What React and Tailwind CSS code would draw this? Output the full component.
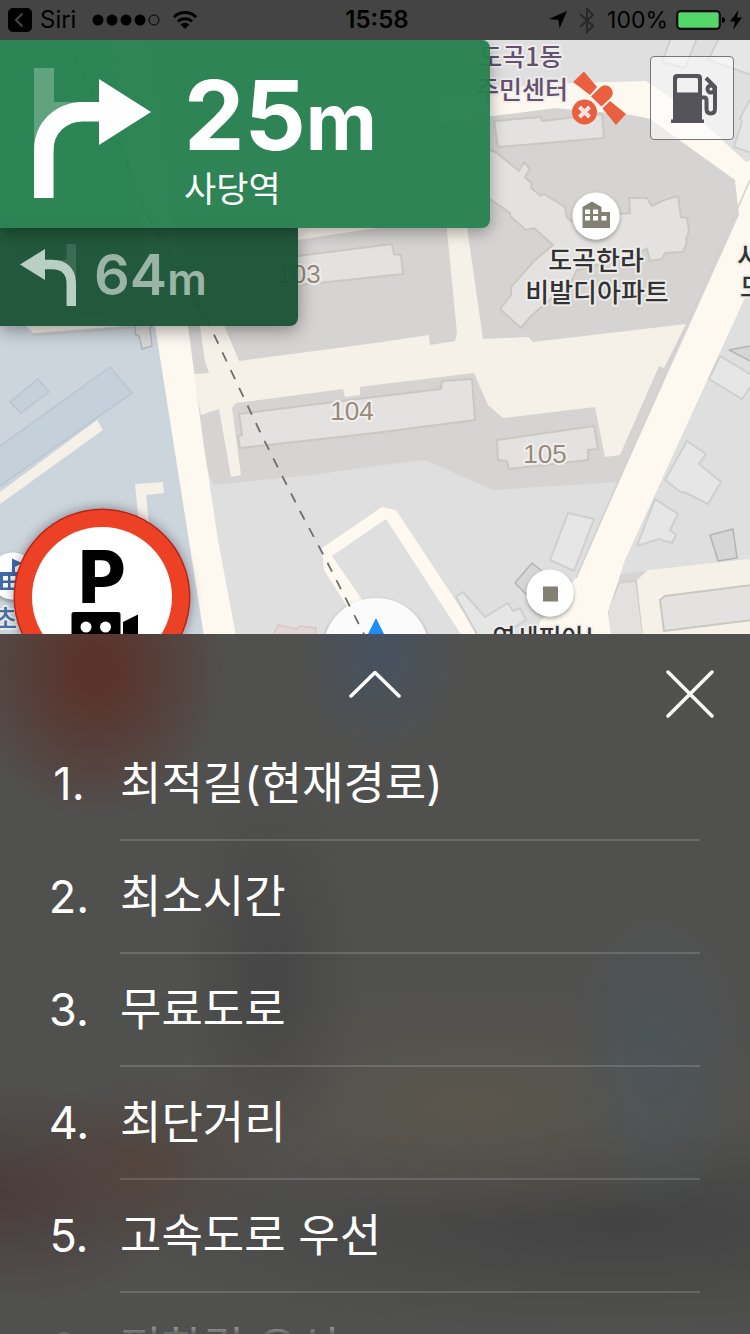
import React from "react";

const CREAM = "#fdf8f0";
const ALLEY = "#f5f0e8";

const routes = [
  "최적길(현재경로)",
  "최소시간",
  "무료도로",
  "최단거리",
  "고속도로 우선",
  "편한길 우선",
];

const complexBuildings = [
  "290,257 392,244 394,254 401,255 403,274 290,286",
  "239,414 374,397 441,389 442,381 472,379 475,420 375,433 240,448 238,436 242,435",
  "497,440 594,426 598,449 588,450 588,460 509,469 507,461 498,460",
  "494,121 541,117 542,121 602,114 604,138 498,147",
  "480,145 497,153 519,171 524,162 530,169 525,177 532,184 531,188 541,196 544,194 565,207 567,218 576,224 620,214 630,213 629,198 647,198 652,206 664,200 678,196 681,217 687,218 689,230 686,240 687,242 683,252 665,253 662,259 650,261 647,249 625,258 577,270 572,280 531,316 521,328 500,309 511,295 511,287 534,261 553,245 534,228 526,230 510,216 510,213 490,199 480,190",
  "660,600 665,596 760,584 760,619 664,631",
];

const cityBuildings = [
  "720,356 757,378 742,399 709,379",
  "687,441 706,454 699,464 721,482 708,504 684,492 682,493 665,480",
  "655,499 678,514 670,530 676,535 672,543 659,539 637,546",
  "568,513 594,519 574,571 550,560",
  "456,597 463,592 485,617 508,603 513,611 520,608 526,620 500,636 478,636",
  "671,38 662,62 685,68 697,38",
  "720,36 708,60 760,78 760,38",
  "750,100 740,118 742,122 734,147 760,156 760,100",
];

const darkOutlined = [
  "729,350 760,344 760,366",
  "710,535 733,529 737,558 718,561",
  "532,563 544,573 530,598 515,583",
  "136,322 152,320 150,330 152,346 142,349 139,336 135,334",
];

function MapLabel({ x, y, size, fill, children, weight = 500, anchor = "middle" }) {
  return (
    <text
      x={x}
      y={y}
      fontSize={size}
      fill={fill}
      fontWeight={weight}
      textAnchor={anchor}
      stroke="#f0efed"
      strokeOpacity="0.9"
      strokeWidth="4"
      strokeLinejoin="round"
      paintOrder="stroke"
      className="font-['Noto_Sans_CJK_KR',sans-serif]"
    >
      {children}
    </text>
  );
}

function BuildingNumber({ x, y, children }) {
  return (
    <text
      x={x}
      y={y}
      fontSize="26"
      fill="#978b7b"
      textAnchor="middle"
      stroke="#f0efed"
      strokeWidth="4"
      strokeLinejoin="round"
      paintOrder="stroke"
      className="font-['Liberation_Sans',sans-serif]"
    >
      {children}
    </text>
  );
}

function MapCanvas() {
  return (
    <svg
      viewBox="0 40 750 594"
      preserveAspectRatio="xMinYMin slice"
      className="absolute inset-0 h-full w-full"
      role="img"
      aria-label="지도"
    >
      <defs>
        <filter id="pinShadow" x="-30%" y="-30%" width="160%" height="160%">
          <feDropShadow dx="0" dy="2" stdDeviation="2" floodOpacity="0.35" />
        </filter>
        <filter id="signShadow" x="-30%" y="-30%" width="160%" height="160%">
          <feDropShadow dx="0" dy="0" stdDeviation="6" floodOpacity="0.4" />
        </filter>
      </defs>
      <rect x="0" y="40" width="750" height="594" fill="#dfdfdf" />
      <polygon
        points="160,130 545,108 650,113 735,180 739,215 618,482 493,490 425,460 375,466 312,475 213,485 150,300"
        fill="#d5d4d2"
      />
      <polygon points="0,40 120,40 156,326 206,634 0,634" fill="#ccd4dc" />
      <polygon points="618,575 680,566 650,590 620,584" fill="#d5d4d2" />
      <polygon points="619,583 636,581 643,636 609,636 608,610" fill="#e2e1df" stroke="#cfcecc" strokeWidth="1.5" />

      <g fill={ALLEY}>
        <polygon points="20,320 33,333 150,324 150,310" />
        <polygon points="290,226 390,226 290,241" />
        <polygon points="199,320 222,320 239,361 375,343 429,335 430,345 455,341 457,333 446,220 466,220 483,339 528,337 533,342 686,324 664,368 659,366 620,455 605,457 595,407 503,418 488,405 474,373 375,385 360,387 360,395 345,397 343,389 236,403 232,408 241,475 231,477 219,409 201,415 193,374 209,373 205,361" />
        <polygon points="0,492 97,420 103,430 0,504" />
        <polygon points="135,484 163,482 164,493 146,495 149,524 139,524" />
        <polygon points="637,580 648,570 760,558 760,636 643,636" />
      </g>
      <polyline points="33,335 150,326" fill="none" stroke="#c9c8c6" strokeWidth="2" />

      <g fill="#c4d0da" stroke="#bbc5ce" strokeWidth="1.5">
        <polygon points="10,402 38,379 49,392 21,413" />
        <polygon points="-4,449 110,367 132,393 -4,489" />
      </g>

      <g fill={CREAM}>
        <polygon points="110,40 150,40 188,326 203,440 218,540 236,636 204,636 155,326" />
        <polygon points="440,92 572,83 646,81 694,114 746,162 760,156 760,265 625,560 608,612 611,636 536,636 540,622 576,578 739,215 735,180 650,119 632,115 555,108 440,123" />
        <polygon points="322,548 382,507 396,510 479,636 462,636 386,519 332,556 372,614 362,630 324,570" />
      </g>
      <polyline points="750,180 576,578" fill="none" stroke="#d2d1cf" strokeWidth="1.5" />

      <g fill="#e3e2e0" stroke="#c9c8c1" strokeWidth="2" strokeLinejoin="round">
        {complexBuildings.map((p) => (
          <polygon key={p} points={p} />
        ))}
      </g>
      <g fill="#e6e6e6" stroke="#cfcfcf" strokeWidth="2" strokeLinejoin="round">
        {cityBuildings.map((p) => (
          <polygon key={p} points={p} />
        ))}
      </g>
      <g fill="#d6d6d6" stroke="#b4b4b4" strokeWidth="1.5" strokeLinejoin="round">
        {darkOutlined.map((p) => (
          <polygon key={p} points={p} />
        ))}
      </g>
      <polygon points="273,636 278,625 297,629 299,626 316,628 315,636" fill="#e3d6d6" stroke="#dcc5c5" strokeWidth="1.5" />

      <circle cx="376" cy="651" r="53" fill="#fbfbfb" filter="url(#pinShadow)" />
      <polyline
        points="73,55 120,146 148,216 208,322 262,436 301,513 324,556 367,640"
        fill="none"
        stroke="#6e6e6e"
        strokeWidth="1.8"
        strokeDasharray="10 9.6"
      />
      <polygon points="376,618 386,638 366,638" fill="#1f8bf5" />

      <BuildingNumber x="299" y="283">103</BuildingNumber>
      <BuildingNumber x="352" y="420">104</BuildingNumber>
      <BuildingNumber x="545" y="463">105</BuildingNumber>
      <MapLabel x="521" y="66" size="25" fill="#65506f">도곡1동</MapLabel>
      <MapLabel x="522" y="99" size="25" fill="#65506f">주민센터</MapLabel>
      <MapLabel x="596" y="270" size="26" fill="#333333">도곡한라</MapLabel>
      <MapLabel x="597" y="302" size="26" fill="#333333">비발디아파트</MapLabel>
      <MapLabel x="737" y="266" size="26" fill="#333333" anchor="start">서초</MapLabel>
      <MapLabel x="740" y="297" size="26" fill="#333333" anchor="start">모던</MapLabel>
      <MapLabel x="550" y="647" size="25" fill="#333333">연세피아노</MapLabel>
      <MapLabel x="-6" y="628" size="25" fill="#4a6ea5" anchor="start">초등</MapLabel>

      <g filter="url(#pinShadow)" fill="#ffffff">
        <circle cx="596" cy="216" r="23.5" />
        <circle cx="550" cy="593" r="23.5" />
        <circle cx="13" cy="576" r="23.5" />
      </g>
      <path d="M582.500 228V207L592 201.500L601.500 207V212H610V228Z" fill="#828073" />
      <path d="M585 209.500h5v4.500h-5zM593 209.500h5v4.500h-5zM585 216h5v4.500h-5zM593 216h5v4.500h-5zM601.500 216h5v4.500h-5z" fill="#ffffff" />
      <rect x="543" y="586.500" width="15" height="15" fill="#828073" />
      <path d="M0 572H12V558.500L22 563L15 567V572H28V590H0Z" fill="#4268a8" />
      <path d="M3 576h5v4.500H3zM10.500 576h5v4.500h-5zM3 583h5v4.500H3zM10.500 583h5v4.500h-5z" fill="#ffffff" />

      <g fill="#ea5f40">
        <polygon points="584,71.500 573,82 590,95 597,87" />
        <path d="M591 96.500L600 87.500Q606 83 611 88Q615 94 610 98.500L601.500 106.500Z" />
        <polygon points="610,101 626,114 616,125 602.500,108.500" />
        <circle cx="584.500" cy="112" r="12.500" />
      </g>
      <path d="M579.500 107L589.500 117M589.500 107L579.500 117" stroke="#efe6e2" strokeWidth="4" />

      <g>
        <circle cx="102" cy="597" r="88.500" fill="#b3281b" filter="url(#signShadow)" />
        <circle cx="102" cy="597" r="87" fill="#ec4124" />
        <circle cx="102" cy="597" r="70" fill="#ffffff" />
        <text x="102" y="603" fontSize="73" fontWeight="800" textAnchor="middle" className="font-['Inter',sans-serif]">
          P
        </text>
        <path d="M74 612H118Q120.500 612 120.500 614.500V640H71.500V614.500Q71.500 612 74 612ZM123 622L138 614.500V640H123Z" />
        <circle cx="86" cy="627" r="5.500" fill="#ffffff" />
        <circle cx="105.500" cy="627" r="5.500" fill="#ffffff" />
      </g>
    </svg>
  );
}

function StatusBar() {
  return (
    <header className="grid h-10 shrink-0 grid-cols-[1fr_auto_1fr] items-center bg-[#444444] px-2 font-['Inter',sans-serif] text-[22px] leading-10 text-black">
      <div className="flex items-center">
        <button type="button" className="flex items-center gap-2" aria-label="Siri로 돌아가기">
          <svg width="24" height="24" viewBox="0 0 24 24">
            <rect width="24" height="24" rx="5" fill="#000" />
            <path d="M14.500 5.500L8 12L14.500 18.500" fill="none" stroke="#444" strokeWidth="2.200" />
          </svg>
          <span className="text-[24px]">Siri</span>
        </button>
        <svg className="ml-4" width="68" height="12" viewBox="0 0 68 12">
          <circle cx="6" cy="6" r="5.500" />
          <circle cx="20" cy="6" r="5.500" />
          <circle cx="34" cy="6" r="5.500" />
          <circle cx="48" cy="6" r="5.500" />
          <circle cx="62" cy="6" r="5" fill="none" stroke="#000" />
        </svg>
        <svg className="ml-3" width="26" height="20" viewBox="0 0 26 20">
          <path d="M2 7.200A15.500 15.500 0 0 1 24 7.200" fill="none" stroke="#000" strokeWidth="3" />
          <path d="M6 11.500A10 10 0 0 1 20 11.500" fill="none" stroke="#000" strokeWidth="3" />
          <path d="M13 19L8.500 14.500A6.500 6.500 0 0 1 17.500 14.500Z" />
        </svg>
      </div>
      <time className="pl-1 text-[24px] font-semibold">15:58</time>
      <div className="flex items-center justify-end">
        <svg width="18" height="18" viewBox="0 0 18 18">
          <path d="M18 0L10.500 17.500L9.500 9L0 8Z" />
        </svg>
        <svg className="ml-3" width="16" height="27" viewBox="0 0 16 27">
          <path d="M1 7L14 19L8 25V2L14 8L1 20" fill="none" stroke="#282828" strokeWidth="2" />
        </svg>
        <span className="ml-3 text-[23px]">100%</span>
        <svg className="ml-2" width="50" height="20" viewBox="0 0 50 20">
          <rect x="1" y="1" width="43" height="18" rx="3.500" fill="none" stroke="#000" strokeWidth="1.500" />
          <rect x="2.500" y="2.500" width="40" height="15" rx="2" fill="#53d769" />
          <path d="M46 7Q49 7.500 49 10Q49 12.500 46 13Z" />
        </svg>
        <svg className="ml-1" width="12" height="20" viewBox="0 0 12 20">
          <path d="M8.500 0L0 11.500H5L3 20L12 7.500H7Z" />
        </svg>
      </div>
    </header>
  );
}

function Guidance() {
  return (
    <div className="relative flex flex-col items-start font-['Inter','Noto_Sans_CJK_KR',sans-serif]">
      <section className="relative z-10 flex h-[188px] w-[490px] gap-8 rounded-r-lg bg-[#27804ff5] pl-[34px] text-white shadow-[0_4px_16px_rgba(0,0,0,0.35)]">
        <svg className="mt-7 shrink-0" width="118" height="130" viewBox="0 0 118 130" role="img" aria-label="우회전">
          <path d="M0 0H20V34H50L20 60V84H0Z" fill="#fff" opacity="0.25" />
          <path d="M9.800 130V82C9.800 60 27 43.700 49 43.700H67" fill="none" stroke="#fff" strokeWidth="19.500" />
          <path d="M65 11L117 44L65 77Z" fill="#fff" />
        </svg>
        <div className="flex flex-col pt-7">
          <p className="text-[96px] leading-[94px] font-bold">
            25<span className="text-[78px]">m</span>
          </p>
          <p className="text-[35px] leading-10">사당역</p>
        </div>
      </section>
      <section className="flex h-[98px] w-[298px] items-start gap-[18px] rounded-br-lg bg-[#1c5437f7] pt-4 pl-5 text-[#9ab5a5] shadow-[0_4px_18px_rgba(0,0,0,0.4)]">
        <svg className="shrink-0" width="56" height="62" viewBox="0 0 56 62" role="img" aria-label="좌회전">
          <path d="M46.500 0H56V36L36 16H46.500Z" fill="#fff" opacity="0.12" />
          <path d="M51.300 62V40C51.300 27 44 20.500 32 20.500H23" fill="none" stroke="#bacfc3" strokeWidth="9.500" />
          <path d="M0 20.500L25 5V36Z" fill="#bacfc3" />
        </svg>
        <p className="text-[56px] leading-[62px] font-semibold">
          64<span className="text-[44px]">m</span>
        </p>
      </section>
    </div>
  );
}

function FuelButton() {
  return (
    <button
      type="button"
      aria-label="주유소"
      className="absolute top-4 right-4 flex size-[84px] items-center justify-center rounded border border-[#77777a] bg-white/55"
    >
      <svg width="84" height="84" viewBox="650 56 84 84" className="shrink-0">
        <path
          fillRule="evenodd"
          fill="#55545a"
          d="M677 74H698Q702 74 702 78V119.500H704V123H671V119.500H673V78Q673 74 677 74ZM678.500 78Q677 78 677 79.500V92.500H698V79.500Q698 78 696.500 78Z"
        />
        <path
          d="M702 97.500H704Q706.500 97.500 706.500 100.500V108.500Q706.500 113.500 710.800 113.500Q715 113.500 715 108.500V87L706 78"
          fill="none"
          stroke="#55545a"
          strokeWidth="4"
        />
        <circle cx="711" cy="89" r="3.500" fill="none" stroke="#55545a" strokeWidth="4" />
      </svg>
    </button>
  );
}

function RouteSheet() {
  return (
    <section className="relative flex min-h-0 flex-1 flex-col bg-[#50504f] bg-[radial-gradient(ellipse_130px_150px_at_95px_35px,#5a342c_15%,#5a342c80_60%,transparent),radial-gradient(ellipse_80px_110px_at_380px_10px,#465260,transparent),radial-gradient(ellipse_90px_200px_at_270px_340px,#464646,transparent),radial-gradient(ellipse_90px_150px_at_655px_430px,#4b565ccc,transparent),radial-gradient(ellipse_130px_90px_at_150px_530px,#55403599,transparent),radial-gradient(ellipse_200px_110px_at_0px_560px,#4a3c3a,transparent),radial-gradient(ellipse_320px_120px_at_470px_470px,#5a564c,transparent),radial-gradient(ellipse_500px_110px_at_620px_590px,#434343,transparent)]">
      <div className="flex h-[94px] shrink-0 items-start justify-between px-9 pt-[36px]">
        <span className="w-12" />
        <button type="button" aria-label="목록 펼치기">
          <svg width="52" height="28" viewBox="0 0 52 28">
            <path d="M2 26L26 2.500L50 26" fill="none" stroke="#fff" strokeWidth="3.500" strokeLinecap="round" strokeLinejoin="round" />
          </svg>
        </button>
        <button type="button" aria-label="닫기">
          <svg width="48" height="48" viewBox="0 0 48 48">
            <path d="M2 2L46 46M46 2L2 46" fill="none" stroke="#fff" strokeWidth="3.500" strokeLinecap="round" />
          </svg>
        </button>
      </div>
      <ol className="min-h-0 flex-1 overflow-y-auto pr-[50px] font-['Inter','Noto_Sans_CJK_KR',sans-serif] text-[45px] text-white [scrollbar-width:none]">
        {routes.map((name, i) => (
          <li key={name}>
            <button type="button" className="flex w-full text-left leading-[111px]">
              <span className="w-[120px] shrink-0 pl-[18px] text-center">{i + 1}.</span>
              <span className="flex-1 border-b-2 border-white/15 whitespace-nowrap">{name}</span>
            </button>
          </li>
        ))}
      </ol>
      <div className="pointer-events-none absolute inset-x-0 bottom-0 h-5 bg-gradient-to-b from-transparent to-[#505050e6]" />
    </section>
  );
}

export default function App() {
  return (
    <main className="flex h-screen flex-col overflow-hidden">
      <StatusBar />
      <div className="relative h-[594px] shrink-0 overflow-hidden">
        <MapCanvas />
        <Guidance />
        <FuelButton />
      </div>
      <RouteSheet />
    </main>
  );
}
